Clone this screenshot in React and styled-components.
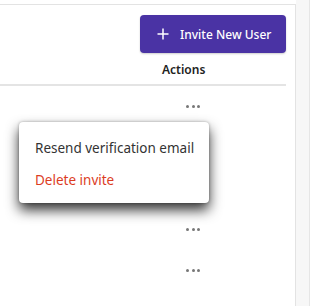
import React from "react";
import styled, { createGlobalStyle } from "styled-components";

const GlobalStyle = createGlobalStyle`
  html, body {
    margin: 0;
    padding: 0;
    background: #fff;
    font-family: "Noto Sans", "Open Sans", sans-serif;
  }
`;

const App = () => {
  const rows = [0, 1, 2, 3, 4];
  return (
    <Page>
      <GlobalStyle />
      <Content>
        <Toolbar>
          <InviteButton>
            <PlusIcon viewBox="0 0 12 12">
              <path d="M6 0.5v11M0.5 6h11" stroke="#fff" strokeWidth="1.5" />
            </PlusIcon>
            Invite New User
          </InviteButton>
        </Toolbar>
        <Table>
          <HeaderRow>
            <Spacer />
            <ActionsCell>Actions</ActionsCell>
          </HeaderRow>
          {rows.map((r) => (
            <Row key={r}>
              <Spacer />
              <DotsCell>
                <Dots>
                  <span />
                  <span />
                  <span />
                </Dots>
              </DotsCell>
            </Row>
          ))}
        </Table>
        <Menu>
          <MenuItem>Resend verification email</MenuItem>
          <MenuItem danger>Delete invite</MenuItem>
        </Menu>
      </Content>
      <SideStrip />
    </Page>
  );
};

const Page = styled.div`
  display: flex;
  width: 320px;
  height: 306px;
  overflow: hidden;
`;

const Content = styled.div`
  position: relative;
  width: 296px;
  margin-top: 4px;
  border-top: 1px solid #e3e3e3;
  border-right: 1px solid #e3e3e3;
  box-sizing: border-box;
`;

const SideStrip = styled.div`
  width: 13px;
  background: #f7f7f7;
  border-right: 1px solid #e6e6e6;
`;

const Toolbar = styled.div`
  display: flex;
  justify-content: flex-end;
  padding: 10px 9px 0 0;
`;

const InviteButton = styled.button`
  display: flex;
  align-items: center;
  gap: 11px;
  width: 146px;
  height: 38px;
  padding: 0 0 0 17px;
  border: none;
  border-radius: 4px;
  background: #4a33a4;
  color: #fff;
  font-family: inherit;
  font-size: 12px;
  font-weight: 500;
  box-shadow: 0 1px 2px rgba(0, 0, 0, 0.2);
`;

const PlusIcon = styled.svg`
  width: 12px;
  height: 12px;
`;

const Table = styled.div`
  margin-right: 9px;
  margin-top: 7px;
`;

const HeaderRow = styled.div`
  display: flex;
  align-items: center;
  height: 24px;
  border-bottom: 2px solid #e4e4e4;
`;

const Spacer = styled.div`
  flex: 1;
`;

const ActionsCell = styled.div`
  width: 124px;
  font-size: 12px;
  font-weight: 600;
  color: #222;
  padding-bottom: 6px;
`;

const Row = styled.div`
  display: flex;
  align-items: center;
  height: 41px;
`;

const DotsCell = styled.div`
  width: 100px;
  display: flex;
`;

const Dots = styled.div`
  display: flex;
  gap: 2.5px;
  padding-bottom: 1px;
  & span {
    width: 3px;
    height: 3px;
    border-radius: 50%;
    background: #777;
  }
`;

const Menu = styled.div`
  position: absolute;
  left: 19px;
  top: 117px;
  width: 190px;
  height: 81px;
  box-sizing: border-box;
  padding: 17px 0 0 16px;
  background: #fff;
  border-radius: 4px;
  box-shadow: 0 7px 13px rgba(0, 0, 0, 0.8), 0 0 3px rgba(0, 0, 0, 0.3);
  display: flex;
  flex-direction: column;
  gap: 14px;
`;

const MenuItem = styled.div`
  font-size: 13.5px;
  line-height: 18px;
  color: ${(p) => (p.danger ? "#dc3d1f" : "#333")};
`;

export default App;
